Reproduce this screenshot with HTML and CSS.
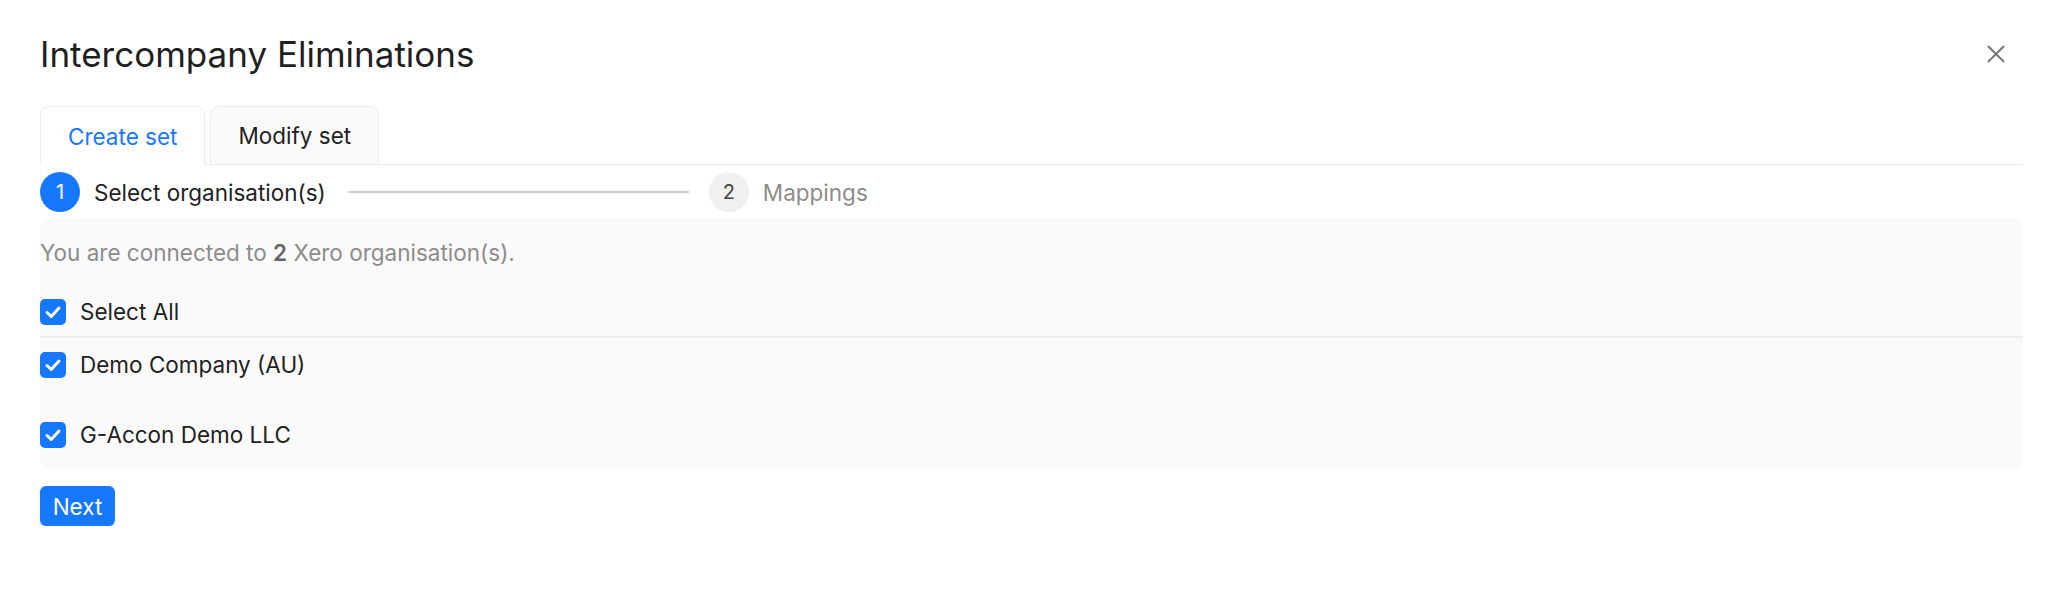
FILE: index.html
```html
<!DOCTYPE html>
<html lang="en">
<head>
<meta charset="utf-8">
<title>Intercompany Eliminations</title>
<link rel="stylesheet" href="styles.css">
</head>
<body>
<div class="modal">
  <div class="header">
    <h1 class="title">Intercompany Eliminations</h1>
    <button class="close" aria-label="Close">
      <svg width="18" height="18" viewBox="0 0 18 18"><path d="M1 1 L17 17 M17 1 L1 17" stroke="#777" stroke-width="2" fill="none"/></svg>
    </button>
  </div>
  <div class="tabs">
    <div class="tab active">Create set</div>
    <div class="tab">Modify set</div>
  </div>
  <div class="steps">
    <div class="step-icon current">1</div>
    <div class="step-title current">Select organisation(s)</div>
    <div class="step-line"></div>
    <div class="step-icon wait">2</div>
    <div class="step-title wait">Mappings</div>
  </div>
  <div class="panel">
    <p class="info">You are connected to <b>2</b> Xero organisation(s).</p>
    <div class="row select-all">
      <span class="checkbox"><svg width="26" height="26" viewBox="0 0 26 26"><path d="M7 13.5 L11.2 17.5 L19 9" stroke="#fff" stroke-width="3" fill="none" stroke-linecap="round" stroke-linejoin="round"/></svg></span>
      <span class="label">Select All</span>
    </div>
    <div class="orgs">
      <div class="row">
        <span class="checkbox"><svg width="26" height="26" viewBox="0 0 26 26"><path d="M7 13.5 L11.2 17.5 L19 9" stroke="#fff" stroke-width="3" fill="none" stroke-linecap="round" stroke-linejoin="round"/></svg></span>
        <span class="label">Demo Company (AU)</span>
      </div>
      <div class="row">
        <span class="checkbox"><svg width="26" height="26" viewBox="0 0 26 26"><path d="M7 13.5 L11.2 17.5 L19 9" stroke="#fff" stroke-width="3" fill="none" stroke-linecap="round" stroke-linejoin="round"/></svg></span>
        <span class="label">G-Accon Demo LLC</span>
      </div>
    </div>
  </div>
  <button class="next">Next</button>
</div>
</body>
</html>
```
FILE: styles.css
```css
* { box-sizing: border-box; }
body {
  margin: 0;
  font-family: Inter, "Noto Sans", sans-serif;
  color: #222;
  background: #fff;
}
.modal {
  padding: 34px 25px 0 40px;
}
.header {
  display: flex;
  align-items: center;
  justify-content: space-between;
  height: 40px;
}
.title {
  margin: 0;
  font-size: 35px;
  font-weight: 400;
  line-height: 40px;
  color: #1f1f1f;
}
.close {
  border: 0;
  background: none;
  padding: 0;
  margin-right: 18px;
  width: 18px;
  height: 18px;
  display: flex;
}
.tabs {
  display: flex;
  gap: 5px;
  margin-top: 32px;
  border-bottom: 1px solid #ececec;
}
.tab {
  height: 58px;
  padding: 0 27px;
  display: flex;
  align-items: center;
  font-size: 22.5px;
  color: #222;
  background: #fafafa;
  border: 1px solid #ececec;
  border-bottom: 0;
  border-radius: 9px 9px 0 0;
}
.tab.active {
  background: #fff;
  color: #1677ff;
  margin-bottom: -1px;
  height: 59px;
}
.steps {
  display: flex;
  align-items: center;
  margin-top: 7px;
  height: 40px;
}
.step-icon {
  width: 40px;
  height: 40px;
  border-radius: 50%;
  display: flex;
  align-items: center;
  justify-content: center;
  font-size: 20px;
  flex: none;
}
.step-icon.current { background: #1677ff; color: #fff; }
.step-icon.wait { background: #f0f0f0; color: #444; }
.step-title {
  font-size: 22.5px;
  margin-left: 14px;
}
.step-title.current { color: #222; }
.step-title.wait { color: #8c8c8c; }
.step-line {
  width: 341px;
  height: 2px;
  background: #cfcfcf;
  margin: 0 20px 0 22px;
}
.panel {
  margin-top: 6px;
  background: #fafafa;
  border-radius: 10px;
  padding: 19px 0 21px;
}
.info {
  margin: 0;
  font-size: 22.5px;
  line-height: 32px;
  color: #8c8c8c;
}
.info b { color: #666; font-weight: 600; }
.row {
  display: flex;
  align-items: center;
  gap: 14px;
  height: 26px;
}
.select-all {
  margin-top: 30px;
  height: 39px;
  align-items: flex-start;
  border-bottom: 2px solid #ececec;
}
.orgs {
  display: flex;
  flex-direction: column;
  gap: 44px;
  padding-top: 14px;
}
.checkbox {
  width: 26px;
  height: 26px;
  border-radius: 5px;
  background: #1677ff;
  display: flex;
  flex: none;
}
.label {
  font-size: 22.5px;
  line-height: 26px;
  color: #222;
}
.next {
  margin-top: 17px;
  height: 40px;
  width: 75px;
  padding: 0;
  border: 0;
  border-radius: 6px;
  background: #1677ff;
  color: #fff;
  font-family: Inter, "Noto Sans", sans-serif;
  font-size: 22.5px;
  box-shadow: 0 2px 0 rgba(5,145,255,0.1);
}
```
